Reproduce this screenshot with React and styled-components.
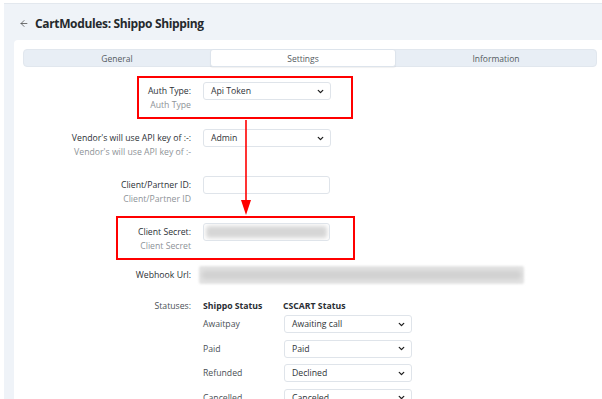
import React from 'react';
import styled, { createGlobalStyle } from 'styled-components';
import { ChevronDown, ArrowLeft } from 'lucide-react';

const Global = createGlobalStyle`
  html, body { margin: 0; padding: 0; background: #fff; }
  body { font-family: "Open Sans", "Noto Sans", sans-serif; color: #2f3337; }
  * { box-sizing: border-box; }
`;

const Page = styled.div`
  position: relative;
  width: 602px;
  height: 399px;
  overflow: hidden;
  padding: 3px 0 0 4px;
  background: #fff;
`;

const Shell = styled.div`
  height: 100%;
  background: #eff3f8;
  border-top: 1px solid #e3e8ee;
  padding-left: 10px;
  display: flex;
  flex-direction: column;
`;

const Header = styled.header`
  height: 36px;
  flex: none;
  display: flex;
  align-items: center;
  gap: 6px;
  padding: 2px 0 0 5px;
`;

const Back = styled.span`
  display: flex;
  align-items: center;
  width: 10px;
  color: #444;
`;

const Title = styled.h1`
  margin: 0;
  font-size: 12px;
  font-weight: 700;
  color: #25292d;
  letter-spacing: -0.35px;
`;

const Card = styled.main`
  flex: 1;
  background: #fff;
  border-top-left-radius: 4px;
  padding: 9px 5px 0 9px;
`;

const Tabs = styled.nav`
  display: grid;
  grid-template-columns: 186px 186px 1fr;
  height: 18px;
  background: #e8eef5;
  border: 1px solid #e1e7ee;
  border-radius: 4px;
`;

const Tab = styled.div`
  display: flex;
  align-items: center;
  justify-content: center;
  font-size: 8.5px;
  color: #555b61;
  border-radius: 3px;
  margin: -1px 0;
  background: ${p => (p.$active ? '#fff' : 'transparent')};
  border: ${p => (p.$active ? '1px solid #dde4ec' : '1px solid transparent')};
  box-shadow: ${p => (p.$active ? '0 1px 1px rgba(0,0,0,0.06)' : 'none')};
`;

const Form = styled.section`
  margin-top: 15px;
  display: flex;
  flex-direction: column;
`;

const FieldRow = styled.div`
  display: grid;
  grid-template-columns: 168px auto;
  column-gap: ${p => p.$gap || 12}px;
  align-items: start;
  margin-bottom: ${p => p.$mb}px;
`;

const LabelBlock = styled.div`
  text-align: right;
  display: flex;
  flex-direction: column;
`;

const Label = styled.div`
  font-size: 8.7px;
  line-height: 18px;
  color: #2c3136;
  white-space: nowrap;
`;

const SubLabel = styled.div`
  font-size: 8.7px;
  line-height: 10px;
  color: #8e9398;
  white-space: nowrap;
`;

const SelectBox = styled.div`
  width: ${p => p.$w || 128}px;
  height: 18px;
  border: 1px solid #dfe4ea;
  border-radius: 3px;
  background: #fff;
  display: flex;
  align-items: center;
  justify-content: space-between;
  padding: 0 5px 0 7px;
  font-size: 8.7px;
  color: #2f3337;
`;

const InputBox = styled.div`
  width: 127px;
  height: 18px;
  border: 1px solid #dfe4ea;
  border-radius: 3px;
  background: #fff;
  overflow: hidden;
  display: flex;
  align-items: center;
  padding: 0 2px;
`;

const Blur = styled.div`
  flex: 1;
  height: ${p => p.$h || 12}px;
  background: ${p => p.$c || '#d8d8d8'};
  filter: blur(${p => p.$b || 2}px);
  border-radius: 2px;
`;

const WideBlur = styled.div`
  width: 325px;
  height: 18px;
  background: #e3e3e3;
  border-radius: 2px;
  display: flex;
  align-items: center;
  padding: 0 3px;
  filter: blur(1px);
`;

const StatusTable = styled.div`
  display: flex;
  flex-direction: column;
`;

const StatusHead = styled.div`
  display: grid;
  grid-template-columns: 80px 128px;
  font-size: 8.7px;
  font-weight: 700;
  line-height: 12px;
  color: #2a2e33;
  margin-bottom: 3px;
`;

const StatusRow = styled.div`
  display: grid;
  grid-template-columns: 81px 128px;
  align-items: center;
  margin-bottom: 6.5px;
`;

const StatusName = styled.div`
  font-size: 8.7px;
  color: #4a4f55;
`;

const StatusLabel = styled(Label)`
  line-height: 12px;
  color: #4a4f55;
`;

const Callout = styled.div`
  position: absolute;
  left: ${p => p.$x}px;
  top: ${p => p.$y}px;
  width: ${p => p.$w}px;
  height: ${p => p.$h}px;
  border: 2px solid #ff0000;
  pointer-events: none;
`;

const Arrow = styled.svg`
  position: absolute;
  left: 240px;
  top: 119px;
`;

function Select({ value, w }) {
  return (
    <SelectBox $w={w}>
      <span>{value}</span>
      <ChevronDown size={9} strokeWidth={3.4} color="#1e1e1e" />
    </SelectBox>
  );
}

const statuses = [
  ['Awaitpay', 'Awaiting call'],
  ['Paid', 'Paid'],
  ['Refunded', 'Declined'],
  ['Cancelled', 'Canceled'],
];

export default function App() {
  return (
    <>
      <Global />
      <Page>
        <Shell>
          <Header>
            <Back>
              <ArrowLeft size={11} strokeWidth={1.8} />
            </Back>
            <Title>CartModules: Shippo Shipping</Title>
          </Header>
          <Card>
            <Tabs>
              <Tab>General</Tab>
              <Tab $active>Settings</Tab>
              <Tab>Information</Tab>
            </Tabs>
            <Form>
              <FieldRow $mb={19}>
                <LabelBlock>
                  <Label>Auth Type:</Label>
                  <SubLabel>Auth Type</SubLabel>
                </LabelBlock>
                <Select value="Api Token" />
              </FieldRow>
              <FieldRow $mb={19}>
                <LabelBlock>
                  <Label>Vendor's will use API key of :-:</Label>
                  <SubLabel>Vendor's will use API key of :-</SubLabel>
                </LabelBlock>
                <Select value="Admin" />
              </FieldRow>
              <FieldRow $mb={19}>
                <LabelBlock>
                  <Label>Client/Partner ID:</Label>
                  <SubLabel>Client/Partner ID</SubLabel>
                </LabelBlock>
                <InputBox />
              </FieldRow>
              <FieldRow $mb={15}>
                <LabelBlock>
                  <Label>Client Secret:</Label>
                  <SubLabel>Client Secret</SubLabel>
                </LabelBlock>
                <InputBox>
                  <Blur $h={12} $c="#d6d6d6" $b={2} />
                </InputBox>
              </FieldRow>
              <FieldRow $mb={16} $gap={8}>
                <LabelBlock>
                  <Label>Webhook Url:</Label>
                </LabelBlock>
                <WideBlur>
                  <Blur $h={8} $c="#cfcfcf" $b={2} />
                </WideBlur>
              </FieldRow>
              <FieldRow $mb={0}>
                <LabelBlock>
                  <StatusLabel>Statuses:</StatusLabel>
                </LabelBlock>
                <StatusTable>
                  <StatusHead>
                    <span>Shippo Status</span>
                    <span>CSCART Status</span>
                  </StatusHead>
                  {statuses.map(([name, val]) => (
                    <StatusRow key={name}>
                      <StatusName>{name}</StatusName>
                      <Select value={val} />
                    </StatusRow>
                  ))}
                </StatusTable>
              </FieldRow>
            </Form>
          </Card>
        </Shell>
        <Callout $x={137} $y={76} $w={216} $h={43} />
        <Callout $x={116} $y={216} $w={239} $h={44} />
        <Arrow width="14" height="98" viewBox="0 0 14 98">
          <line x1="6" y1="1" x2="6" y2="84" stroke="#ff0000" strokeWidth="1.6" />
          <polygon points="1,81 11,81 6,96" fill="#ff0000" />
        </Arrow>
      </Page>
    </>
  );
}
